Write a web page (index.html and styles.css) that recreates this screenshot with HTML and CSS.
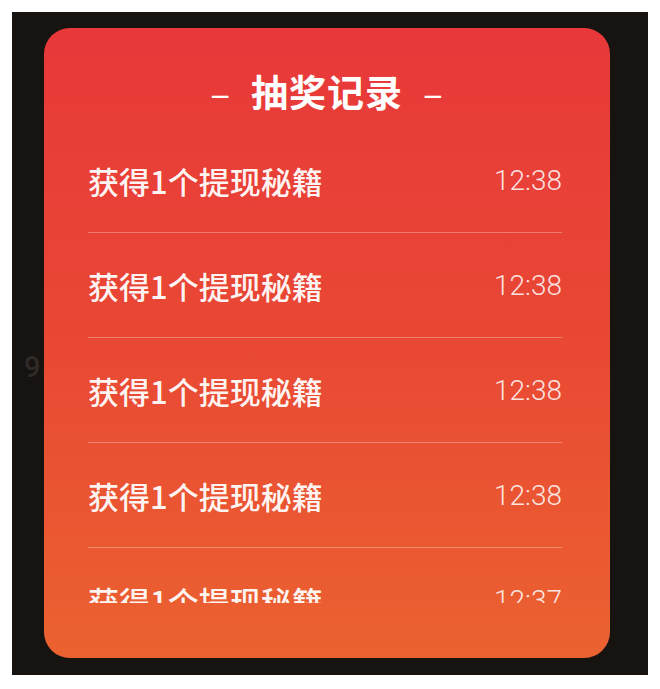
FILE: index.html
```html
<!DOCTYPE html>
<html>
<head>
    <meta charset="utf-8">
    <link rel="stylesheet" href="styles.css">
</head>
<body>
<div class="backdrop">
    <span class="bg-digit">9</span>
    <div class="record-card">
        <h2 class="record-title"><span class="dash">–</span>抽奖记录<span class="dash">–</span></h2>
        <ul class="record-list">
            <li class="record-item"><span class="record-name">获得1个提现秘籍</span><span class="record-time">12:38</span></li>
            <li class="record-item"><span class="record-name">获得1个提现秘籍</span><span class="record-time">12:38</span></li>
            <li class="record-item"><span class="record-name">获得1个提现秘籍</span><span class="record-time">12:38</span></li>
            <li class="record-item"><span class="record-name">获得1个提现秘籍</span><span class="record-time">12:38</span></li>
            <li class="record-item"><span class="record-name">获得1个提现秘籍</span><span class="record-time">12:37</span></li>
        </ul>
    </div>
</div>
</body>
</html>
```

FILE: styles.css
```css
body {
    margin: 0;
    background-color: #ffffff;
    font-family: "Noto Sans CJK SC", "Noto Sans", sans-serif;
}

.backdrop {
    position: relative;
    margin: 12px;
    width: 636px;
    height: 663px;
    padding: 16px 0 0 32px;
    box-sizing: border-box;
    background-color: #171311;
}

.bg-digit {
    position: absolute;
    left: 12px;
    top: 338px;
    font-family: "Roboto", sans-serif;
    font-size: 29px;
    font-weight: 500;
    color: #2f2a27;
}

.record-card {
    position: relative;
    width: 566px;
    height: 630px;
    border-radius: 26px;
    background: linear-gradient(180deg, #e8383a 0%, #e94834 50%, #eb6230 100%);
    padding-top: 41px;
    box-sizing: border-box;
}

.record-title {
    margin: 0;
    text-align: center;
    color: #ffffff;
    font-size: 37px;
    font-weight: 700;
    line-height: 44px;
    letter-spacing: 1px;
}

.record-title .dash {
    font-weight: 400;
    margin: 0 20px;
}

.record-list {
    list-style: none;
    margin: 15px 48px 0 44px;
    padding: 0;
    height: 475px;
    overflow: hidden;
}

.record-item {
    display: flex;
    align-items: center;
    justify-content: space-between;
    height: 104px;
    border-bottom: 1px solid rgba(255, 255, 255, 0.3);
}

.record-name {
    color: rgba(255, 255, 255, 0.96);
    font-size: 31px;
    font-weight: 500;
}

.record-time {
    color: rgba(255, 255, 255, 0.86);
    font-family: "Roboto", sans-serif;
    font-size: 28px;
    font-weight: 300;
}
```
